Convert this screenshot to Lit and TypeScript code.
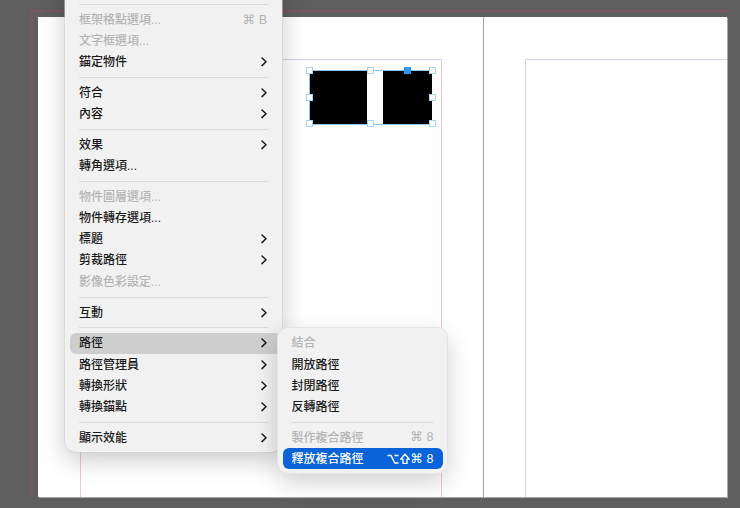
import { LitElement, html, css, svg, nothing } from "lit";
import { customElement } from "lit/decorators.js";

type Row = {
  label?: string;
  off?: boolean;
  sub?: boolean;
  keys?: string;
  mods?: boolean;
  hover?: boolean;
  on?: boolean;
};

const MAIN: Row[] = [
  {},
  { label: "框架格點選項...", off: true, keys: "⌘ B" },
  { label: "文字框選項...", off: true },
  { label: "錨定物件", sub: true },
  {},
  { label: "符合", sub: true },
  { label: "內容", sub: true },
  {},
  { label: "效果", sub: true },
  { label: "轉角選項..." },
  {},
  { label: "物件圖層選項...", off: true },
  { label: "物件轉存選項..." },
  { label: "標題", sub: true },
  { label: "剪裁路徑", sub: true },
  { label: "影像色彩設定...", off: true },
  {},
  { label: "互動", sub: true },
  {},
  { label: "路徑", sub: true, hover: true },
  { label: "路徑管理員", sub: true },
  { label: "轉換形狀", sub: true },
  { label: "轉換錨點", sub: true },
  {},
  { label: "顯示效能", sub: true },
];

const SUB: Row[] = [
  { label: "結合", off: true },
  { label: "開放路徑" },
  { label: "封閉路徑" },
  { label: "反轉路徑" },
  {},
  { label: "製作複合路徑", off: true, keys: "⌘ 8" },
  { label: "釋放複合路徑", keys: "⌘ 8", mods: true, on: true },
];

// handle centres on the selected group, blue one is the hovered point
const HANDLES = [
  [0, 0], [61, 0], [123, 0],
  [0, 27], [123, 27],
  [0, 53], [61, 53], [123, 53],
];

const chevron = svg`<path d="M1 1l4 3.8L1 8.6" fill="none" stroke="currentColor" stroke-width="1.5" stroke-linecap="round" stroke-linejoin="round"/>`;
const optionKey = svg`<path d="M.5 2.5h3.4l4 7.5h3.6M7.4 2.5h4.1" fill="none" stroke="currentColor" stroke-width="1.5"/>`;
const shiftKey = svg`<path d="M5 1.2L9.4 6.2H7v4.2H3V6.2H.6z" fill="none" stroke="currentColor" stroke-width="1.3" stroke-linejoin="round"/>`;

@customElement("app-root")
export class AppRoot extends LitElement {
  static styles = css`
    :host {
      display: block;
      position: relative;
      width: 740px;
      height: 508px;
      overflow: hidden;
      background: #5f5f5f;
      font-family: "Liberation Sans", "Noto Sans CJK TC", sans-serif;
      font-size: 12px;
    }
    .bleed {
      position: absolute;
      left: 31px;
      top: 10px;
      width: 697px;
      height: 487px;
      border: solid #7b5560;
      border-width: 2px 0 0 2px;
      box-sizing: border-box;
    }
    .page {
      position: absolute;
      left: 38px;
      top: 17px;
      width: 689px;
      height: 480px;
      background: #fff;
      overflow: hidden;
      box-shadow: 1px 1px 0 #a8a8a8;
    }
    .spine {
      position: absolute;
      left: 445px;
      top: 0;
      bottom: 0;
      width: 1px;
      background: #a3a3a3;
    }
    .margin {
      position: absolute;
      top: 42px;
      bottom: 0;
      border-top: 1px solid #d3cfe4;
      border-left: 1px solid #eec9d4;
    }
    .margin.left {
      left: 42px;
      width: 360px;
      border-right: 1px solid #eec9d4;
    }
    .margin.right {
      left: 487px;
      right: 0;
    }
    .group {
      position: absolute;
      left: 309px;
      top: 70px;
      width: 123px;
      height: 55px;
      border: 1px solid #8cc6f4;
      box-sizing: border-box;
    }
    .shape {
      position: absolute;
      top: 0;
      bottom: 0;
      background: #000;
    }
    .shape.a {
      left: 0;
      width: 57px;
    }
    .shape.b {
      left: 73px;
      width: 49px;
    }
    .handle {
      position: absolute;
      width: 7px;
      height: 7px;
      box-sizing: border-box;
      background: #fff;
      border: 1px solid #a6d2f5;
    }
    .handle.hot {
      background: #2b98f5;
      border-color: #2b98f5;
    }
    .menu {
      position: absolute;
      box-sizing: border-box;
      display: flex;
      flex-direction: column;
      background: #f1f1f1;
      box-shadow: 0 0 0 0.5px #cfcfcf, 0 8px 24px rgba(0, 0, 0, 0.22);
      color: #1b1b1b;
    }
    /* runs off the top of the window, so its upper corners stay hidden */
    .menu.main {
      left: 65px;
      top: -20.5px;
      width: 217px;
      height: 472.5px;
      padding: 20px 5px 0;
      border-radius: 10px;
    }
    .menu.sub {
      left: 278px;
      top: 328px;
      width: 169px;
      height: 145px;
      padding: 4.8px 4.5px;
      border-radius: 10px;
      box-shadow: 0 0 0 1px #e4e4e8, 0 8px 24px rgba(0, 0, 0, 0.2);
    }
    .row {
      flex: none;
      display: flex;
      align-items: center;
      justify-content: space-between;
      height: 21.15px;
      padding: 0 9px;
      border-radius: 6px;
      line-height: 1;
      white-space: nowrap;
      font-weight: 500;
    }
    .main .row {
      padding-right: 10px;
    }
    .sep {
      flex: none;
      height: 9.75px;
      display: flex;
      align-items: center;
      padding: 0 9px;
    }
    .sep i {
      display: block;
      flex: 1;
      height: 1px;
      background: #dcdcdc;
    }
    .off {
      color: #b4b4b4;
    }
    .main .hover {
      background: #cecece;
      margin-right: -4px;
      padding-right: 14px;
    }
    .on {
      background: #0a63d9;
      color: #fff;
    }
    .keys {
      display: flex;
      align-items: center;
      gap: 1px;
      font-family: "Liberation Sans", "DejaVu Sans", sans-serif;
      font-size: 12.5px;
    }
    .keys svg {
      height: 12px;
      display: block;
    }
    .keys .opt {
      width: 12px;
    }
    .keys .shift {
      width: 10px;
    }
    .chev {
      width: 6px;
      height: 10px;
      display: block;
    }
  `;

  private renderRow(r: Row) {
    if (!r.label) return html`<div class="sep"><i></i></div>`;
    const cls = `row${r.off ? " off" : ""}${r.hover ? " hover" : ""}${r.on ? " on" : ""}`;
    return html`<div class=${cls}>
      <span>${r.label}</span>
      ${r.keys
        ? html`<span class="keys">
            ${r.mods
              ? html`<svg class="opt" viewBox="0 0 12 12">${optionKey}</svg><svg class="shift" viewBox="0 0 10 12">${shiftKey}</svg>`
              : nothing}
            <span>${r.keys}</span>
          </span>`
        : nothing}
      ${r.sub ? html`<svg class="chev" viewBox="0 0 6 10">${chevron}</svg>` : nothing}
    </div>`;
  }

  render() {
    return html`
      <div class="bleed"></div>
      <div class="page">
        <div class="margin left"></div>
        <div class="spine"></div>
        <div class="margin right"></div>
      </div>
      <div class="group">
        <div class="shape a"></div>
        <div class="shape b"></div>
      </div>
      ${HANDLES.map(
        ([x, y]) => html`<div class="handle" style="left:${306 + x}px;top:${67 + y}px"></div>`,
      )}
      <div class="handle hot" style="left:404px;top:67px"></div>
      <div class="menu main">${MAIN.map((r) => this.renderRow(r))}</div>
      <div class="menu sub">${SUB.map((r) => this.renderRow(r))}</div>
    `;
  }
}
